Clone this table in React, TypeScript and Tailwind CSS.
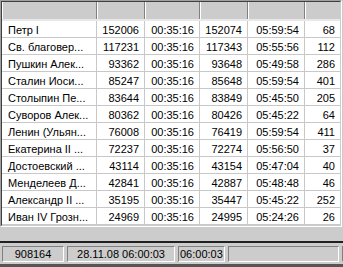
const rows: [string, string, string, string, string, string][] = [
  ["Петр I", "152006", "00:35:16", "152074", "05:59:54", "68"],
  ["Св. благовер...", "117231", "00:35:16", "117343", "05:55:56", "112"],
  ["Пушкин Алек...", "93362", "00:35:16", "93648", "05:49:58", "286"],
  ["Сталин Иоси...", "85247", "00:35:16", "85648", "05:59:54", "401"],
  ["Столыпин Пе...", "83644", "00:35:16", "83849", "05:45:50", "205"],
  ["Суворов Алек...", "80362", "00:35:16", "80426", "05:45:22", "64"],
  ["Ленин (Ульян...", "76008", "00:35:16", "76419", "05:59:54", "411"],
  ["Екатерина II ...", "72237", "00:35:16", "72274", "05:56:50", "37"],
  ["Достоевский ...", "43114", "00:35:16", "43154", "05:47:04", "40"],
  ["Менделеев Д...", "42841", "00:35:16", "42887", "05:48:48", "46"],
  ["Александр II ...", "35195", "00:35:16", "35447", "05:45:22", "252"],
  ["Иван IV Грозн...", "24969", "00:35:16", "24995", "05:24:26", "26"],
];

// column widths incl. the 1px right grid line
const widths = ["w-[95px]", "w-[48px]", "w-[55px]", "w-[48px]", "w-[57px]", "flex-1"];

function HeaderRow() {
  return (
    <div className="flex h-[19px] border-b-2 border-[#e8e8e8] bg-[#cccccc]">
      {widths.map((w, i) => (
        <div
          key={i}
          className={`${w} h-full border-l border-white ${i < 5 ? "border-r border-r-[#808080]" : ""}`}
        />
      ))}
    </div>
  );
}

function StatusPanel({ text, className }: { text: string; className: string }) {
  return (
    <div
      className={`${className} flex h-[16px] items-center border border-t-[#808080] border-l-[#808080] border-b-white border-r-white`}
    >
      {text}
    </div>
  );
}

export default function App() {
  return (
    <div className="flex h-[267px] w-[343px] flex-col bg-[#cccccc] font-['Liberation_Sans',Arial,sans-serif] text-[11px] leading-none text-black">
      <div className="h-[227px] w-[342px] border border-t-[#a0a0a0] border-l-[#a0a0a0] border-b-white border-r-white">
        <div className="h-full overflow-hidden border border-t-[#404040] border-l-[#404040] border-b-[#cccccc] border-r-[#cccccc] bg-white">
          <HeaderRow />
          {rows.map((r, ri) => (
            <div key={ri} className="flex h-[17px] border-b border-[#c8c8c8]">
              {r.map((c, ci) => (
                <div
                  key={ci}
                  className={`${widths[ci]} flex h-full items-center overflow-hidden whitespace-nowrap pt-[2px] ${
                    ci === 0 ? "pl-[6px]" : "justify-end pr-[5px]"
                  } ${ci < 5 ? "border-r border-[#c8c8c8]" : ""}`}
                >
                  {c}
                </div>
              ))}
            </div>
          ))}
        </div>
      </div>
      <div className="h-[14px]" />
      <div className="h-[2px] bg-[#202020]" />
      <div className="flex h-[21px] gap-[3px] pl-[2px] pt-[3px]">
        <StatusPanel text="908164" className="w-[62px] justify-center" />
        <StatusPanel text="28.11.08 06:00:03" className="w-[108px] justify-center" />
        <StatusPanel text="06:00:03" className="w-[47px] pl-[1px]" />
        <StatusPanel text="" className="w-[111px]" />
        <StatusPanel text="" className="flex-1 border-r-0" />
      </div>
      <div className="flex-1 bg-[#555555]" />
    </div>
  );
}
